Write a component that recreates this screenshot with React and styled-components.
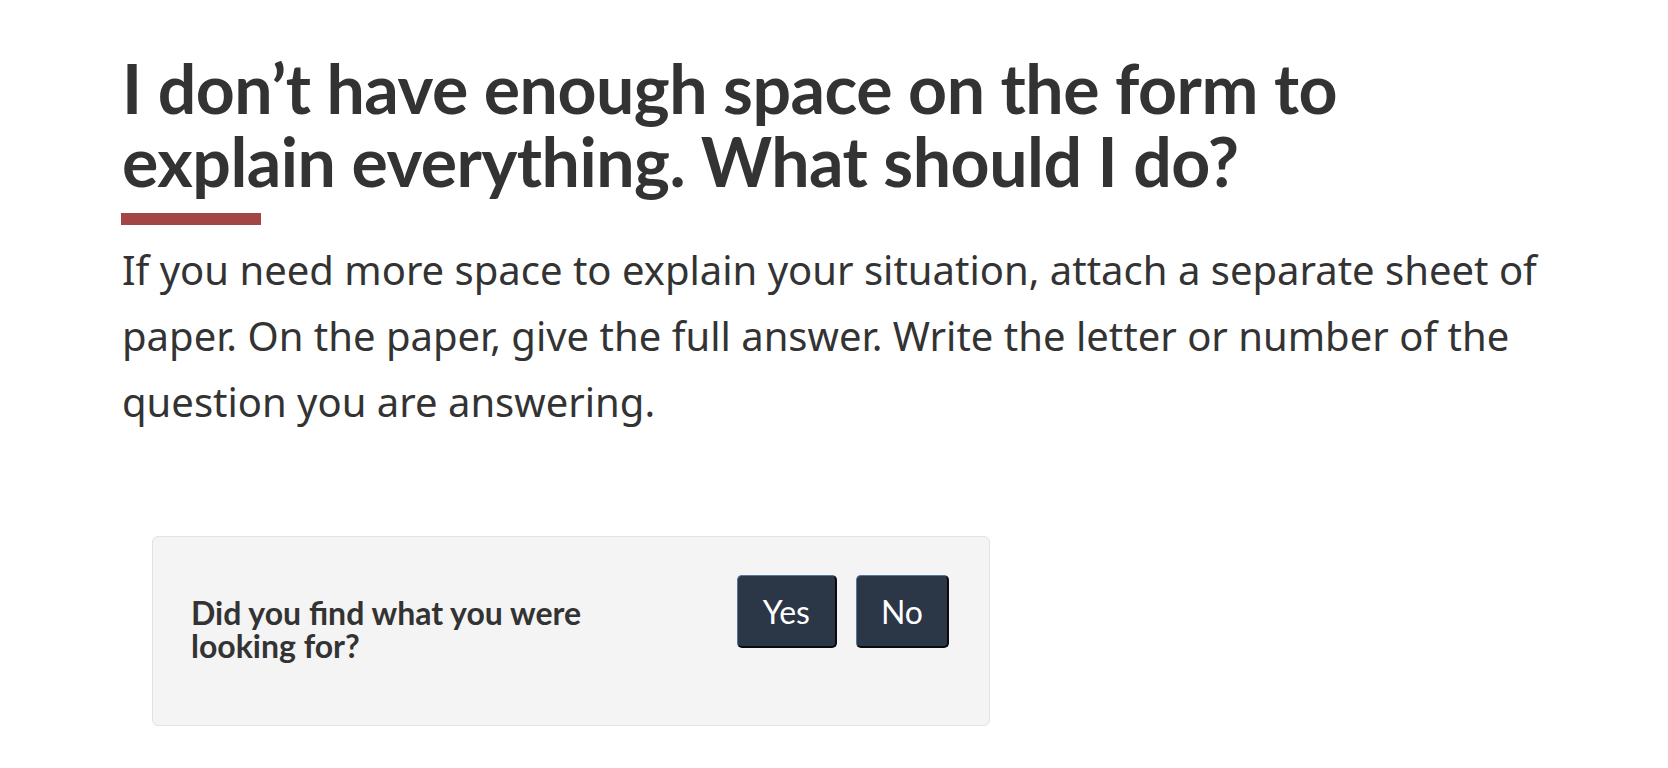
import React from "react";
import styled, { createGlobalStyle } from "styled-components";

const GlobalStyle = createGlobalStyle`
  body {
    margin: 0;
    background: #fff;
    color: #333;
    font-family: "Noto Sans", "Open Sans", sans-serif;
  }
`;

const Page = styled.main`
  padding: 52px 0 40px 122px;
  width: 1425px;
`;

const Title = styled.h1`
  margin: 0;
  font-family: Lato, "Liberation Sans", sans-serif;
  font-weight: 700;
  font-size: 68px;
  letter-spacing: -0.5px;
  line-height: 72.5px;
  color: #333;
`;

const Accent = styled.div`
  width: 140px;
  height: 12px;
  margin: 16px 0 0 -1px;
  background: #a34545;
`;

const Body = styled.p`
  margin: 12px 0 0;
  font-size: 40px;
  line-height: 66px;
  color: #333;
`;

const Feedback = styled.section`
  margin: 101px 0 0 30px;
  width: 838px;
  box-sizing: border-box;
  padding: 38px 40px 38px 38px;
  background: #f4f4f4;
  border: 1px solid #e2e2e2;
  border-radius: 6px;
  display: flex;
  justify-content: space-between;
  align-items: flex-start;
`;

const Question = styled.p`
  margin: 21px 0 25px;
  max-width: 440px;
  font-family: Lato, "Liberation Sans", sans-serif;
  font-weight: 700;
  font-size: 32px;
  line-height: 33px;
  color: #333;
`;

const Actions = styled.div`
  display: flex;
  gap: 19px;
`;

const Button = styled.button`
  height: 73px;
  padding: 0 ${(p) => p.$pad}px;
  font-family: Lato, "Liberation Sans", sans-serif;
  font-size: 32px;
  color: #fff;
  background: #2b3647;
  border-style: solid;
  border-width: 1px 2px 2px 1px;
  border-color: #55769f #0a0a0a #0a0a0a #55769f;
  border-radius: 5px;
  cursor: pointer;
`;

export default function App() {
  return (
    <>
      <GlobalStyle />
      <Page>
        <Title>I don’t have enough space on the form to explain everything. What should I do?</Title>
        <Accent />
        <Body>
          If you need more space to explain your situation, attach a separate sheet of paper. On the paper, give
          the full answer. Write the letter or number of the question you are answering.
        </Body>
        <Feedback>
          <Question>Did you find what you were looking for?</Question>
          <Actions>
            <Button $pad={25}>Yes</Button>
            <Button $pad={24}>No</Button>
          </Actions>
        </Feedback>
      </Page>
    </>
  );
}
